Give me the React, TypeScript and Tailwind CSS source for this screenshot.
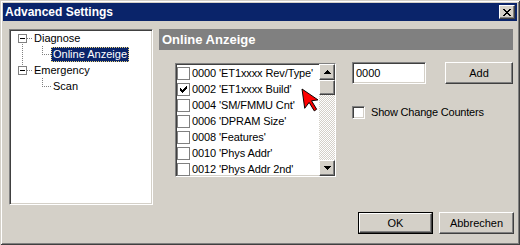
import React from "react"

const raised =
  "border border-t-white border-l-white border-r-[#404040] border-b-[#404040] shadow-[inset_-1px_-1px_0_#808080,inset_1px_1px_0_#d4d0c8] bg-[#d4d0c8]"
const sunken =
  "border border-t-[#808080] border-l-[#808080] border-r-white border-b-white shadow-[inset_1px_1px_0_#404040,inset_-1px_-1px_0_#d4d0c8] bg-white"

const font = "font-['Liberation_Sans',Arial,sans-serif]"

const checkPixels = [
  "......X",
  ".....XX",
  "X...XXX",
  "XX.XXX.",
  "XXXXX..",
  ".XXX...",
  "..X....",
]

function CheckMark() {
  return (
    <svg width="7" height="7" viewBox="0 0 7 7" shapeRendering="crispEdges">
      {checkPixels.flatMap((row, y) =>
        row.split("").map((c, x) =>
          c === "X" ? <rect key={`${x}-${y}`} x={x} y={y} width="1" height="1" fill="#000" /> : null,
        ),
      )}
    </svg>
  )
}

function Dots({ x, y, len, vertical }: { x: number; y: number; len: number; vertical?: boolean }) {
  const dots = []
  for (let i = 0; i < len; i += 2) {
    dots.push(
      <rect
        key={i}
        x={vertical ? x : x + i}
        y={vertical ? y + i : y}
        width="1"
        height="1"
        fill="#808080"
      />,
    )
  }
  return <>{dots}</>
}

function Expander({ x, y }: { x: number; y: number }) {
  return (
    <>
      <rect x={x + 0.5} y={y + 0.5} width="8" height="8" fill="#fff" stroke="#808080" />
      <rect x={x + 2} y={y + 4} width="5" height="1" fill="#000" />
    </>
  )
}

function TreeRow({ indent, label, selected }: { indent: number; label: string; selected?: boolean }) {
  return (
    <div className="flex h-[16px] items-center" style={{ paddingLeft: indent }}>
      <span
        className={
          selected
            ? "flex h-[15px] items-center border border-dotted border-[#e8d37a] bg-[#0a246a] px-[1px] text-white"
            : "flex h-[15px] items-center px-[2px] text-black"
        }
      >
        {label}
      </span>
    </div>
  )
}

function Tree() {
  return (
    <div className={`relative h-[176px] w-[144px] ${sunken}`}>
      <svg className="absolute left-0 top-0" width="140" height="100" shapeRendering="crispEdges">
        <Expander x={8} y={4} />
        <Dots x={17} y={8} len={5} />
        <Dots x={12} y={14} len={22} vertical />
        <Dots x={32} y={16} len={8} vertical />
        <Dots x={32} y={24} len={9} />
        <Expander x={8} y={36} />
        <Dots x={17} y={40} len={5} />
        <Dots x={32} y={48} len={8} vertical />
        <Dots x={32} y={56} len={9} />
      </svg>
      <div className={`relative flex flex-col text-[11px] ${font}`}>
        <TreeRow indent={22} label="Diagnose" />
        <TreeRow indent={41} label="Online Anzeige" selected />
        <TreeRow indent={22} label="Emergency" />
        <TreeRow indent={41} label="Scan" />
      </div>
    </div>
  )
}

const items = [
  { label: "0000 'ET1xxxx Rev/Type'", checked: false },
  { label: "0002 'ET1xxxx Build'", checked: true },
  { label: "0004 'SM/FMMU Cnt'", checked: false },
  { label: "0006 'DPRAM Size'", checked: false },
  { label: "0008 'Features'", checked: false },
  { label: "0010 'Phys Addr'", checked: false },
  { label: "0012 'Phys Addr 2nd'", checked: false },
]

function ScrollButton({ down }: { down?: boolean }) {
  return (
    <div className={`flex h-[16px] w-[16px] items-center justify-center ${raised}`}>
      <svg width="7" height="4" viewBox="0 0 7 4" shapeRendering="crispEdges">
        <polygon points={down ? "0,0 7,0 3.5,4" : "3.5,0 7,4 0,4"} fill="#000" />
      </svg>
    </div>
  )
}

function CheckList() {
  return (
    <div className={`relative mt-[1px] flex h-[114px] w-[161px] ${sunken}`}>
      <div className={`flex flex-1 flex-col pt-[1px] text-[11px] tracking-[-0.1px] ${font}`}>
        {items.map((item) => (
          <div key={item.label} className="flex h-[16px] items-center pl-[1px]">
            <span className="mr-[2px] flex h-[13px] w-[13px] shrink-0 items-center justify-center border border-[#808080] bg-white">
              {item.checked && <CheckMark />}
            </span>
            <span className="whitespace-nowrap text-black">{item.label}</span>
          </div>
        ))}
      </div>
      <div className="flex w-[16px] flex-col">
        <ScrollButton />
        <div className={`h-[15px] w-[16px] ${raised}`} />
        <div className="flex-1 bg-[repeating-conic-gradient(#d4d0c8_0_25%,#ffffff_0_50%)] bg-[length:2px_2px]" />
        <ScrollButton down />
      </div>
      {/* mouse pointer over the list */}
      <svg className="absolute left-[123px] top-[23px]" width="22" height="30" viewBox="0 0 22 30">
        <g transform="translate(3 2) rotate(-8) scale(1.3)">
          <polygon
            points="0,0 0,15 4,11 7,18 9,17 6,10 11,10"
            fill="#ff0000"
            stroke="#000"
            strokeWidth="0.7"
            strokeLinejoin="miter"
          />
        </g>
      </svg>
    </div>
  )
}

function Button({ label, isDefault }: { label: string; isDefault?: boolean }) {
  const inner = (
    <div className={`flex h-full w-full items-center justify-center text-[11px] text-black ${font} ${raised}`}>
      {label}
    </div>
  )
  if (isDefault) {
    return <div className="h-[22px] w-[75px] border border-black">{inner}</div>
  }
  return <div className="h-[22px] w-[75px]">{inner}</div>
}

export default function App() {
  return (
    <div className="h-[245px] w-[520px] bg-[#d4d0c8] p-[3px] shadow-[inset_1px_1px_0_#d4d0c8,inset_-1px_-1px_0_#404040,inset_2px_2px_0_#ffffff,inset_-2px_-2px_0_#808080]">
      <div className="flex h-[18px] items-center justify-between bg-[#0a246a] pl-[2px] pr-[2px]">
        <span className={`text-[12px] font-bold text-white ${font}`}>Advanced Settings</span>
        <div className={`flex h-[14px] w-[16px] items-center justify-center ${raised}`}>
          <svg width="8" height="7" viewBox="0 0 8 7" shapeRendering="crispEdges">
            <path d="M0 0h2v1h-2zM6 0h2v1h-2zM1 1h2v1h-2zM5 1h2v1h-2zM2 2h4v1h-4zM3 3h2v1h-2zM2 4h4v1h-4zM1 5h2v1h-2zM5 5h2v1h-2zM0 6h2v1h-2zM6 6h2v1h-2z" fill="#000" />
          </svg>
        </div>
      </div>

      <div className="flex pl-[6px] pt-[8px]">
        <Tree />
        <div className="ml-[6px] flex w-[354px] flex-col">
          <div className={`flex h-[21px] items-center bg-[#808080] pl-[3px] text-[13px] font-bold text-white ${font}`}>
            Online Anzeige
          </div>
          <div className="flex pl-[16px] pt-[12px]">
            <CheckList />
            <div className="ml-[16px] flex flex-col">
              <div className="flex">
                <div className={`flex h-[22px] w-[74px] items-center pl-[3px] text-[11px] text-black ${font} ${sunken}`}>
                  0000
                </div>
                <div className="ml-[19px] h-[22px] w-[68px]">
                  <div className={`flex h-full w-full items-center justify-center text-[11px] text-black ${font} ${raised}`}>
                    Add
                  </div>
                </div>
              </div>
              <div className="mt-[20px] flex items-center">
                <span className={`h-[13px] w-[13px] ${sunken}`} />
                <span className={`ml-[6px] text-[11px] tracking-[-0.2px] text-black ${font}`}>Show Change Counters</span>
              </div>
            </div>
          </div>
        </div>
      </div>

      <div className="mr-[3px] mt-[7px] flex justify-end gap-[6px]">
        <Button label="OK" isDefault />
        <Button label="Abbrechen" />
      </div>
    </div>
  )
}
